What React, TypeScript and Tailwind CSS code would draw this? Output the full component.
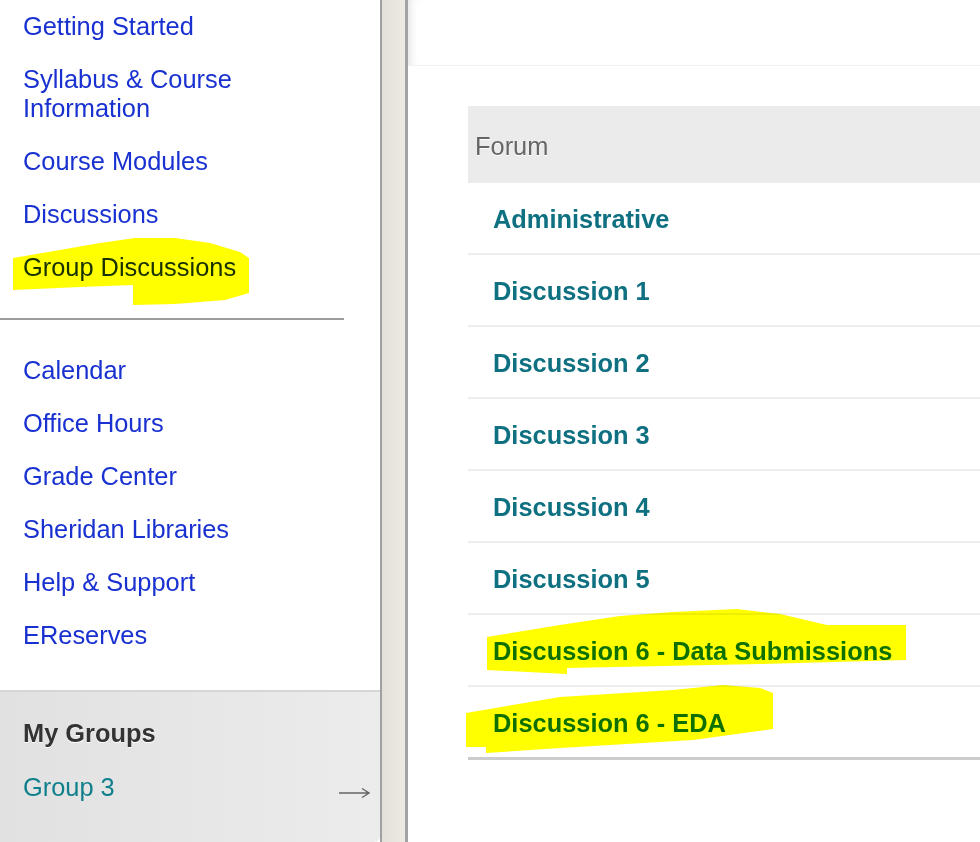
const courseLinks = [
  "Getting Started",
  "Syllabus & Course Information",
  "Course Modules",
  "Discussions",
  "Group Discussions",
];

const toolLinks = [
  "Calendar",
  "Office Hours",
  "Grade Center",
  "Sheridan Libraries",
  "Help & Support",
  "EReserves",
];

const forums = [
  "Administrative",
  "Discussion 1",
  "Discussion 2",
  "Discussion 3",
  "Discussion 4",
  "Discussion 5",
  "Discussion 6 - Data Submissions",
  "Discussion 6 - EDA",
];

// marker strokes someone drew over the screenshot, page coordinates
const highlights = [
  "13,258 60,250 100,243 135,238 175,238 210,243 240,252 249,258 249,293 225,300 175,304 133,305 133,285 80,287 13,290",
  "487,637 560,625 620,616 673,612 737,609 780,614 827,625 906,625 906,660 760,664 567,668 567,674 487,670",
  "466,713 560,697 673,690 723,685 760,688 773,693 773,729 693,740 560,748 486,753 486,747 466,747",
];

function NavLink({ label }: { label: string }) {
  return (
    <a className="block py-3 pl-[23px] pr-6 text-[25.4px] leading-[29px] text-[#1831d0]">
      {label}
    </a>
  );
}

export default function App() {
  return (
    <div
      className="relative flex h-[842px] w-[980px] overflow-hidden bg-white"
      style={{ fontFamily: '"Liberation Sans", Arial, sans-serif' }}
    >
      <aside className="flex w-[382px] shrink-0 flex-col border-r-2 border-[#a0a0a0] bg-white">
        <nav className="w-[344px]">
          {courseLinks.map((l) => (
            <NavLink key={l} label={l} />
          ))}
        </nav>
        <div className="mt-6 h-[2px] w-[344px] bg-[#9c9c9c]" />
        <nav className="mt-6">
          {toolLinks.map((l) => (
            <NavLink key={l} label={l} />
          ))}
        </nav>
        <div className="mt-[28px] flex-1 rounded-br-md border-t-2 border-[#d6d6d6] bg-linear-to-r from-[#e1e1e1] to-[#ececec] pl-[23px] pt-[27px]">
          <h3 className="text-[25.4px] font-bold leading-[29px] text-[#333] [text-shadow:0_1px_0_#fff]">
            My Groups
          </h3>
          <div className="mt-[25px] flex items-center">
            <a className="text-[25.4px] leading-[29px] text-[#10808c]">Group 3</a>
            <svg
              className="ml-auto mr-[10px] mt-[10px]"
              width="31"
              height="12"
              viewBox="0 0 31 12"
              fill="none"
              stroke="#666"
              strokeWidth="1.4"
            >
              <path d="M0 6H29.5M23 1.5L30 6L23 10.5" />
            </svg>
          </div>
        </div>
      </aside>

      <div className="w-[23px] shrink-0 bg-linear-to-r from-[#e4e1d9] to-[#edeae3]" />

      <main className="flex flex-1 flex-col border-l-[3px] border-[#a3a3a3]">
        <header className="h-[66px] border-b border-[#f1f1f1] shadow-[inset_8px_0_8px_-6px_rgba(0,0,0,0.12)]" />
        <section className="pl-[60px] pt-[40px]">
          <div className="flex h-[77px] items-center bg-[#ebebeb] pl-[7px] pt-[3px] text-[25.4px] text-[#666] [text-shadow:0_1px_0_#fff]">
            Forum
          </div>
          {forums.map((f, i) => (
            <div
              key={f}
              className={
                i === forums.length - 1
                  ? "flex h-[73px] items-center border-b-[3px] border-[#cccccc] pl-[25px] pt-[3px]"
                  : "flex h-[72px] items-center border-b-2 border-[#eeeeee] pl-[25px] pt-[3px]"
              }
            >
              <a className="text-[25.4px] font-bold text-[#0e7080]">{f}</a>
            </div>
          ))}
        </section>
      </main>

      <svg
        className="pointer-events-none absolute inset-0 mix-blend-multiply"
        width="980"
        height="842"
      >
        {highlights.map((p, i) => (
          <polygon key={i} points={p} fill="#ffff00" />
        ))}
      </svg>
    </div>
  );
}
